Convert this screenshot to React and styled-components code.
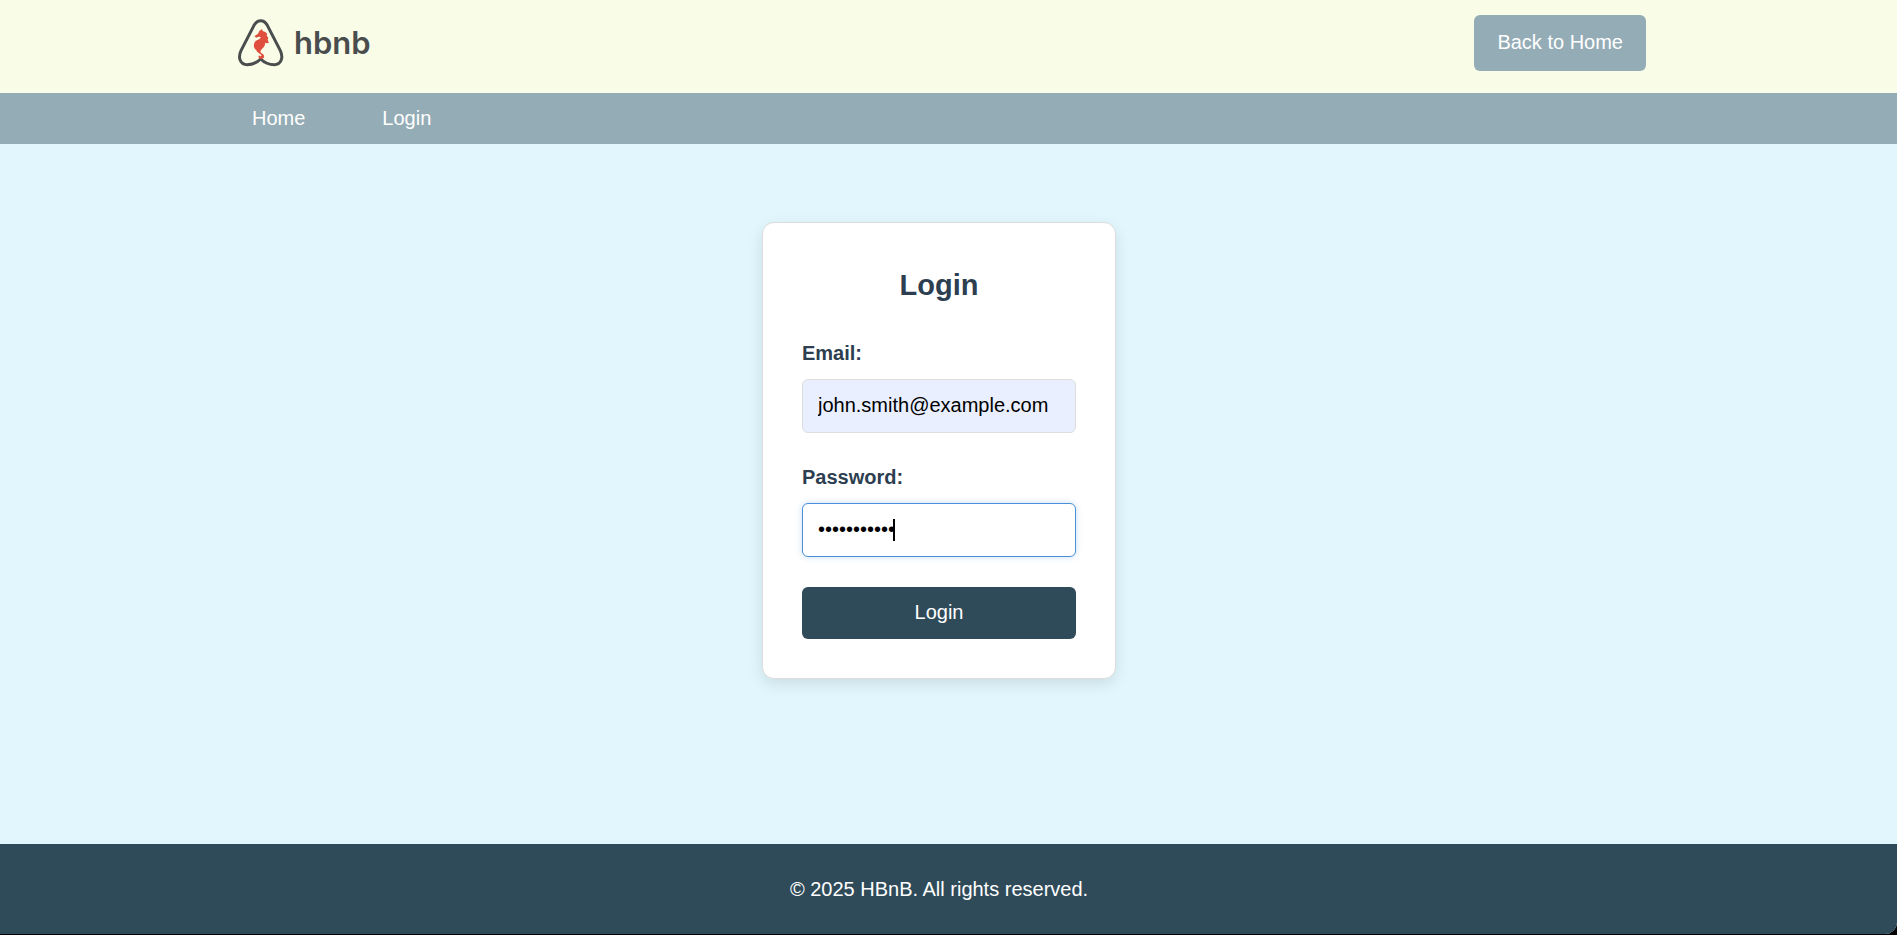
import React from "react";
import styled, { createGlobalStyle } from "styled-components";

const colors = {
  cream: "#f9fce6",
  mist: "#94acb5",
  sky: "#e1f6fd",
  slate: "#2f4b59",
  ink: "#2c3e50",
  focus: "#4a90d9",
};

const GlobalStyle = createGlobalStyle`
  *, *::before, *::after { box-sizing: border-box; }
  body {
    margin: 0;
    background: #000;
    font-family: "Liberation Sans", Arial, sans-serif;
    font-size: 20px;
    line-height: 32px;
    color: ${colors.ink};
  }
  button, input { font: inherit; }
`;

const Page = styled.div`
  display: flex;
  flex-direction: column;
  min-height: calc(100vh - 1px);
  overflow: hidden;
  border-bottom-right-radius: 12px;
  background: ${colors.sky};
`;

const Band = styled.div`
  padding-right: 19px;
`;

const Header = styled(Band)`
  background: ${colors.cream};
`;

const Container = styled.div`
  display: flex;
  align-items: center;
  width: 100%;
  max-width: 1414px;
  margin: 0 auto;
`;

const HeaderRow = styled(Container)`
  justify-content: space-between;
  padding: 15px 0 22px;
`;

const Brand = styled.a`
  display: flex;
  align-items: center;
  gap: 9px;
  padding-left: 5px;
  color: #4a4d4e;
  text-decoration: none;
`;

const BrandName = styled.span`
  font-family: Inter, sans-serif;
  font-size: 31px;
  font-weight: 600;
  line-height: 50px;
`;

const Button = styled.button`
  border: 0;
  border-radius: 6px;
  padding: ${(p) => (p.$wide ? "9px 24px 11px" : "11px 23px 13px")};
  width: ${(p) => (p.$wide ? "100%" : "auto")};
  background: ${(p) => (p.$wide ? colors.slate : colors.mist)};
  color: #fff;
  line-height: 32px;
  cursor: pointer;
`;

const Nav = styled(Band).attrs({ as: "nav" })`
  background: ${colors.mist};
`;

const NavList = styled(Container).attrs({ as: "ul" })`
  gap: 37px;
  padding: 0;
  list-style: none;
`;

const NavLink = styled.a`
  display: block;
  padding: 10px 20px;
  line-height: 31px;
  color: #fff;
  text-decoration: none;
`;

const Main = styled(Band).attrs({ as: "main" })`
  flex: 1;
  display: flex;
  justify-content: center;
  align-items: flex-start;
  padding-top: 78px;
  padding-bottom: 78px;
`;

const Card = styled.section`
  width: 354px;
  max-width: 100%;
  padding: 39px;
  border: 1px solid #ddd;
  border-radius: 12px;
  background: #fff;
  box-shadow: 0 5px 15px rgba(0, 0, 0, 0.1);
`;

const Title = styled.h1`
  margin: 0 0 28px;
  font-size: 29px;
  line-height: 47px;
  text-align: center;
`;

const Form = styled.form`
  display: flex;
  flex-direction: column;
  gap: 30px;
`;

const Fields = styled.div`
  display: flex;
  flex-direction: column;
  gap: 28px;
`;

const Field = styled.div`
  display: flex;
  flex-direction: column;
  gap: 10px;
`;

const Label = styled.label`
  font-weight: 700;
`;

const InputWrap = styled.div`
  position: relative;
  display: flex;
`;

const Input = styled.input`
  width: 100%;
  height: 54px;
  padding: 0 15px 1px;
  border: 1px solid ${(p) => (p.$active ? colors.focus : "#ddd")};
  border-radius: 6px;
  outline: 0;
  background: ${(p) => (p.$filled ? "#e9effe" : "#fff")};
  box-shadow: ${(p) => (p.$active ? "0 0 6px rgba(74, 144, 217, 0.3)" : "none")};
  color: #000;
  caret-color: transparent;
`;

const Caret = styled.span`
  position: absolute;
  top: 16px;
  left: 91px;
  width: 2px;
  height: 22px;
  background: #000;
`;

const Footer = styled(Band).attrs({ as: "footer" })`
  padding-top: 29px;
  padding-bottom: 29px;
  background: ${colors.slate};
  color: #fff;
  text-align: center;
`;

const FooterText = styled.p`
  margin: 0;
`;

function Logo() {
  return (
    <svg width="48" height="50" viewBox="36 54 144 150" aria-hidden="true">
      <path
        d="M107 62C98 62 92 67 87 76L48 152C37 176 48 194 66 194C83 194 97 187 107 177C117 187 131 194 148 194C166 194 177 176 166 152L127 76C122 67 116 62 107 62Z"
        fill="none"
        stroke="#4a4d4e"
        strokeWidth="9"
        strokeLinejoin="round"
      />
      <path
        transform="translate(45 75)"
        d="M43 34L54 26L58 18L66 12L68 18L76 21L82 27L80 32L85 38L83 44L87 53L80 55L75 53C77 61 71 67 65 73C59 79 61 82 67 86C75 91 74 100 65 102C57 103 53 96 57 91C60 95 65 94 64 90C60 86 50 82 49 76C41 71 39 58 45 50C50 44 60 43 62 38C61 33 54 35 49 38Z"
        fill="#e04f3d"
      />
    </svg>
  );
}

export default function App() {
  return (
    <>
      <GlobalStyle />
      <Page>
        <Header as="header">
          <HeaderRow>
            <Brand href="#home" aria-label="hbnb">
              <Logo />
              <BrandName>hbnb</BrandName>
            </Brand>
            <Button type="button">Back to Home</Button>
          </HeaderRow>
        </Header>
        <Nav>
          <NavList>
            <li>
              <NavLink href="#home">Home</NavLink>
            </li>
            <li>
              <NavLink href="#login">Login</NavLink>
            </li>
          </NavList>
        </Nav>
        <Main>
          <Card>
            <Title>Login</Title>
            <Form onSubmit={(e) => e.preventDefault()}>
              <Fields>
                <Field>
                  <Label htmlFor="email">Email:</Label>
                  <Input id="email" type="email" defaultValue="john.smith@example.com" $filled />
                </Field>
                <Field>
                  <Label htmlFor="password">Password:</Label>
                  <InputWrap>
                    <Input id="password" type="password" defaultValue="password123" $active />
                    <Caret />
                  </InputWrap>
                </Field>
              </Fields>
              <Button type="submit" $wide>
                Login
              </Button>
            </Form>
          </Card>
        </Main>
        <Footer>
          <FooterText>© 2025 HBnB. All rights reserved.</FooterText>
        </Footer>
      </Page>
    </>
  );
}
